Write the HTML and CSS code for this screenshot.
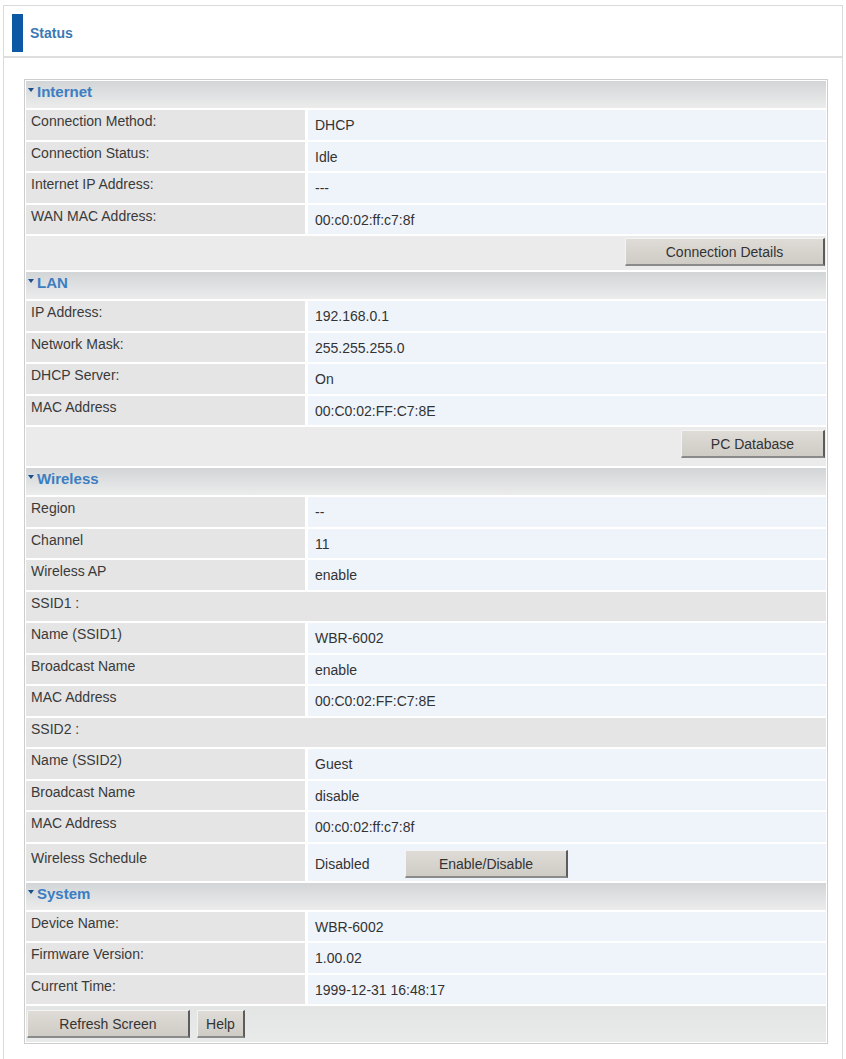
FILE: index.html
```html
<!DOCTYPE html>
<html>
<head>
<meta charset="utf-8">
<title>Status</title>
<link rel="stylesheet" href="styles.css">
</head>
<body>
<div class="frame">
  <div class="title"><span class="bar"></span><span class="title-text">Status</span></div>
  <div class="panel">
    <div class="sec-head"><span class="tri"></span>Internet</div>
    <div class="row"><div class="lbl">Connection Method:</div><div class="val">DHCP</div></div>
    <div class="row"><div class="lbl">Connection Status:</div><div class="val">Idle</div></div>
    <div class="row"><div class="lbl">Internet IP Address:</div><div class="val">---</div></div>
    <div class="row"><div class="lbl">WAN MAC Address:</div><div class="val">00:c0:02:ff:c7:8f</div></div>
    <div class="btn-row"><button class="btn btn-details">Connection Details</button></div>

    <div class="sec-head"><span class="tri"></span>LAN</div>
    <div class="row"><div class="lbl">IP Address:</div><div class="val">192.168.0.1</div></div>
    <div class="row"><div class="lbl">Network Mask:</div><div class="val">255.255.255.0</div></div>
    <div class="row"><div class="lbl">DHCP Server:</div><div class="val">On</div></div>
    <div class="row"><div class="lbl">MAC Address</div><div class="val">00:C0:02:FF:C7:8E</div></div>
    <div class="btn-row btn-row-tall"><button class="btn btn-pc">PC Database</button></div>

    <div class="sec-head"><span class="tri"></span>Wireless</div>
    <div class="row"><div class="lbl">Region</div><div class="val">--</div></div>
    <div class="row"><div class="lbl">Channel</div><div class="val">11</div></div>
    <div class="row"><div class="lbl">Wireless AP</div><div class="val">enable</div></div>
    <div class="row row-full"><div class="lbl">SSID1 :</div></div>
    <div class="row"><div class="lbl">Name (SSID1)</div><div class="val">WBR-6002</div></div>
    <div class="row"><div class="lbl">Broadcast Name</div><div class="val">enable</div></div>
    <div class="row"><div class="lbl">MAC Address</div><div class="val">00:C0:02:FF:C7:8E</div></div>
    <div class="row row-full"><div class="lbl">SSID2 :</div></div>
    <div class="row"><div class="lbl">Name (SSID2)</div><div class="val">Guest</div></div>
    <div class="row"><div class="lbl">Broadcast Name</div><div class="val">disable</div></div>
    <div class="row"><div class="lbl">MAC Address</div><div class="val">00:c0:02:ff:c7:8f</div></div>
    <div class="row row-sched"><div class="lbl">Wireless Schedule</div><div class="val val-sched"><span>Disabled</span><button class="btn btn-enable">Enable/Disable</button></div></div>

    <div class="sec-head"><span class="tri"></span>System</div>
    <div class="row"><div class="lbl">Device Name:</div><div class="val">WBR-6002</div></div>
    <div class="row"><div class="lbl">Firmware Version:</div><div class="val">1.00.02</div></div>
    <div class="row"><div class="lbl">Current Time:</div><div class="val">1999-12-31 16:48:17</div></div>
    <div class="foot-row"><button class="btn btn-refresh">Refresh Screen</button><button class="btn btn-help">Help</button></div>
  </div>
</div>
</body>
</html>
```
FILE: styles.css
```css
html, body {
  margin: 0;
  padding: 0;
  background: #ffffff;
}
body {
  font-family: "Liberation Sans", Arial, sans-serif;
  font-size: 14px;
  color: #363636;
}
.frame {
  margin: 5px 3px 0 3px;
  border: 1px solid #dadada;
  border-bottom: none;
  height: 1054px;
  box-sizing: border-box;
}
.title {
  height: 50px;
  border-bottom: 2px solid #dedede;
  display: flex;
  align-items: center;
  padding: 3px 0 0 8px;
  box-sizing: border-box;
  height: 52px;
}
.bar {
  width: 11px;
  height: 38px;
  background: #0d58a5;
}
.title-text {
  margin-left: 7px;
  font-weight: bold;
  font-size: 14px;
  color: #3c78b4;
}
.panel {
  margin: 21px 14px 0 20px;
  border: 1px solid #cdcdcd;
  padding: 1px;
  display: flex;
  flex-direction: column;
  gap: 2px;
  background: #ffffff;
}
.sec-head {
  height: 27px;
  line-height: 21px;
  padding-left: 2px;
  background: linear-gradient(#d2d5d7, #ececec);
  color: #3b7ec2;
  font-weight: bold;
  font-size: 15px;
  display: flex;
  align-items: flex-start;
}
.tri {
  width: 0;
  height: 0;
  border-left: 3px solid transparent;
  border-right: 3px solid transparent;
  border-top: 4px solid #1d4f8c;
  margin: 7px 3px 0 0;
}
.row {
  display: grid;
  grid-template-columns: 279px 1fr;
  column-gap: 3px;
  height: 29.5px;
}
.lbl {
  background: #e5e5e5;
  padding: 3px 0 0 5px;
  line-height: 16px;
  color: #3a3a3a;
}
.val {
  background: #eff4fb;
  padding: 7px 0 0 7px;
  line-height: 16px;
  color: #333333;
}
.row-full {
  grid-template-columns: 1fr;
}
.row-sched {
  height: 37px;
}
.row-sched .lbl {
  padding-top: 6px;
}
.val-sched {
  display: flex;
  align-items: center;
  padding-top: 6px;
  box-sizing: border-box;
  padding-bottom: 2px;
}
.val-sched span {
  width: 90px;
}
.btn-row {
  height: 34px;
  box-sizing: border-box;
  padding: 2px 1px 0 0;
  background: #ebebeb;
  display: flex;
  justify-content: flex-end;
  align-items: flex-start;
}
.btn-row-tall {
  height: 39px;
  padding-top: 3px;
}
.foot-row {
  height: 35.5px;
  box-sizing: border-box;
  padding: 4px 0 0 1px;
  background: linear-gradient(#e3e4e4, #e9eaea);
  display: flex;
  gap: 7px;
  align-items: flex-start;
}
.btn {
  height: 28px;
  box-sizing: border-box;
  padding: 0;
  margin: 0;
  font-family: "Liberation Sans", Arial, sans-serif;
  font-size: 14px;
  color: #333333;
  background: linear-gradient(#dfdcd7, #cfcbc5);
  border-top: 1px solid #f3f3f3;
  border-left: 1px solid #f3f3f3;
  border-right: 2px solid #5c5c5c;
  border-bottom: 2px solid #8a8a8a;
  border-radius: 0;
}
.btn-details { width: 200px; }
.btn-pc { width: 144px; }
.btn-enable { width: 163px; }
.btn-refresh { width: 163px; }
.btn-help { width: 48px; }
```
